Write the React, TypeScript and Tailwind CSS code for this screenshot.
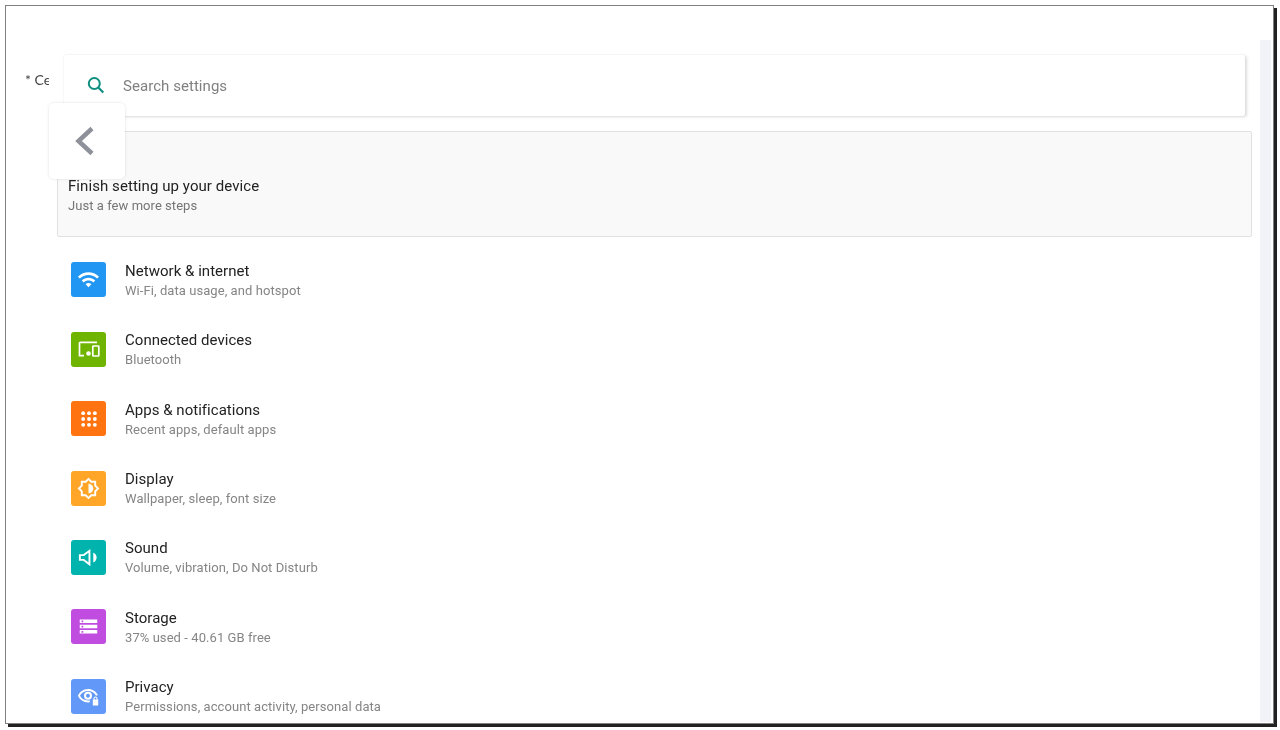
import React from 'react';

type IconProps = { children: React.ReactNode; size?: number };

const Glyph: React.FC<IconProps> = ({ children, size = 20 }) => (
  <svg width={size} height={size} viewBox="0 0 24 24" fill="white">
    {children}
  </svg>
);

const settings = [
  {
    title: 'Network & internet',
    subtitle: 'Wi-Fi, data usage, and hotspot',
    color: 'bg-[#2196f3]',
    icon: (
      <Glyph size={23}>
        <path d="M1 9l2 2c4.97-4.97 13.03-4.97 18 0l2-2C16.93 2.93 7.08 2.93 1 9zm8 8l3 3 3-3c-1.65-1.66-4.34-1.66-6 0zm-4-4l2 2c2.76-2.76 7.24-2.76 10 0l2-2C15.14 9.14 8.87 9.14 5 13z" />
      </Glyph>
    ),
  },
  {
    title: 'Connected devices',
    subtitle: 'Bluetooth',
    color: 'bg-[#6fb400]',
    icon: (
      <Glyph size={24}>
        <path d="M20 5.300H3.500a1 1 0 0 0-1 1V18.700H7" fill="none" stroke="white" strokeWidth="1.700" />
        <circle cx="11.500" cy="16.500" r="2.300" />
        <rect x="15.800" y="9" width="6" height="10" rx="0.500" fill="none" stroke="white" strokeWidth="1.700" />
      </Glyph>
    ),
  },
  {
    title: 'Apps & notifications',
    subtitle: 'Recent apps, default apps',
    color: 'bg-[#ff7410]',
    icon: (
      <Glyph size={20}>
        {[5, 12, 19].map(cy =>
          [5, 12, 19].map(cx => <circle key={`${cx}-${cy}`} cx={cx} cy={cy} r="2.300" />)
        )}
      </Glyph>
    ),
  },
  {
    title: 'Display',
    subtitle: 'Wallpaper, sleep, font size',
    color: 'bg-[#ffa629]',
    icon: (
      <Glyph size={23}>
        <path d="M20 15.310L23.310 12 20 8.690V4h-4.690L12 .690 8.690 4H4v4.690L.690 12 4 15.310V20h4.690L12 23.310 15.310 20H20v-4.690zm-2-.830V18h-3.520L12 20.480 9.520 18H6v-3.520L3.520 12 6 9.520V6h3.520L12 3.520 14.480 6H18v3.520L20.480 12 18 14.480zM12 7v10c2.760 0 5-2.240 5-5s-2.240-5-5-5z" />
      </Glyph>
    ),
  },
  {
    title: 'Sound',
    subtitle: 'Volume, vibration, Do Not Disturb',
    color: 'bg-[#00b3ad]',
    icon: (
      <Glyph size={23}>
        <path d="M3 9.500v5h4l6 4.500V5L7 9.500H3z" fill="none" stroke="white" strokeWidth="2" />
        <path d="M20.500 12c0-2.300-1.400-4.300-3.500-5.300v10.600c2.100-1 3.500-3 3.500-5.300z" />
      </Glyph>
    ),
  },
  {
    title: 'Storage',
    subtitle: '37% used - 40.61 GB free',
    color: 'bg-[#c04de0]',
    icon: (
      <Glyph size={21}>
        <path d="M2 20h20v-4H2v4zm2-3h2v2H4v-2zM2 4v4h20V4H2zm4 3H4V5h2v2zm-4 7h20v-4H2v4zm2-3h2v2H4v-2z" />
      </Glyph>
    ),
  },
  {
    title: 'Privacy',
    subtitle: 'Permissions, account activity, personal data',
    color: 'bg-[#6299f8]',
    icon: (
      <Glyph size={24}>
        <path d="M11 5C6.500 5 2.700 7.800 1 11.700c1.700 3.900 5.500 6.700 10 6.700.6 0 1.200 0 1.800-.2v-2c-.6.1-1.200.2-1.800.2-3.500 0-6.600-1.900-8-4.700 1.400-2.800 4.500-4.700 8-4.700s6.600 1.900 8 4.700l1.900-.6C19.200 7.500 15.500 5 11 5z" />
        <path d="M11 7.700a4 4 0 1 0 0 8 4 4 0 0 0 0-8zm0 2a2 2 0 1 1 0 4 2 2 0 0 1 0-4z" />
        <path d="M20.500 15.500v-1a2 2 0 0 0-4 0v1h-.7v6h5.400v-6h-.7zm-1 0h-2v-1a1 1 0 0 1 2 0v1z" />
      </Glyph>
    ),
  },
];

const App: React.FC = () => {
  return (
    <div className="w-[1280px] h-[730px] overflow-hidden bg-white pt-[5px] pl-[5px] font-['Roboto',sans-serif]">
      <div className="relative w-[1269px] h-[719px] overflow-hidden border border-[#808080] bg-white shadow-[3px_3px_0_#222] blur-[0.6px]">
        {/* scrollbar track */}
        <div className="absolute right-[2px] top-[34px] bottom-[1px] w-[11px] bg-[#f2f3f9]" />

        {/* back button */}
        <div className="absolute left-[43px] top-[97px] z-10 flex h-[76px] w-[76px] items-center justify-center rounded-[5px] bg-white shadow-[0_0_3px_rgba(0,0,0,0.12)]">
          <svg width="24" height="32" viewBox="0 0 24 32" fill="none" className="mr-[4px]">
            <path d="M19 3.500L5.500 16 19 28.500" stroke="#8e9199" strokeWidth="4.500" />
          </svg>
        </div>

        <div className="flex pt-[49px]">
          <div className="mt-[16px] ml-[19px] w-[24px] overflow-hidden whitespace-nowrap font-['Lato',sans-serif] text-[14px] leading-[18px] text-[#444]">
            * Ce
          </div>
          <div className="ml-[15px] flex h-[61px] w-[1181px] items-center rounded-[2px] bg-white pl-[22px] shadow-[0_0_2px_rgba(0,0,0,0.1),2px_1px_3px_rgba(0,0,0,0.12)]">
            <svg width="20" height="20" viewBox="0 0 20 20" fill="none">
              <circle cx="8.300" cy="7.500" r="5.500" stroke="#0f8f80" strokeWidth="2" />
              <path d="M12.300 11.500l5 5" stroke="#0f8f80" strokeWidth="2.200" />
            </svg>
            <span className="relative top-[1px] ml-[17px] text-[15px] tracking-[0.05px] text-[#808080]">Search settings</span>
          </div>
        </div>

        <div className="mt-[15px] ml-[51px] flex h-[106px] w-[1195px] flex-col justify-end rounded-[2px] border border-[#e0e0e0] bg-[#f9f9f9] pb-[21px] pl-[10px]">
          <div className="text-[15px] leading-[20px] tracking-[0.07px] text-[#222]">Finish setting up your device</div>
          <div className="text-[13px] leading-[19px] tracking-[0.05px] text-[#757575]">Just a few more steps</div>
        </div>

        <div className="mt-[8px] ml-[65px]">
          {settings.map(item => (
            <div key={item.title} className="flex h-[69.45px] items-center">
              <div className={`flex h-[35px] w-[35px] items-center justify-center rounded-[3px] ${item.color}`}>
                {item.icon}
              </div>
              <div className="ml-[19px] pt-[1px]">
                <div className="text-[15px] leading-[20px] tracking-[0.03px] text-[#222]">{item.title}</div>
                <div className="text-[13px] leading-[19px] tracking-[0.07px] text-[#858585]">{item.subtitle}</div>
              </div>
            </div>
          ))}
        </div>
      </div>
    </div>
  );
};

export default App;
